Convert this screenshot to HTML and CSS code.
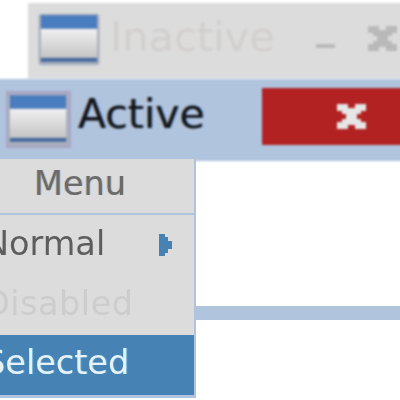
FILE: index.html
```html
<!DOCTYPE html>
<html lang="en">
<head>
    <meta charset="UTF-8">
    <title>Window theme preview</title>
    <link rel="stylesheet" href="styles.css">
</head>
<body>
    <svg class="defs" width="0" height="0">
        <defs>
            <linearGradient id="icon-body" x1="0" y1="0" x2="0" y2="1">
                <stop offset="0" stop-color="#f0f0f0"/>
                <stop offset="1" stop-color="#c4c4c4"/>
            </linearGradient>
            <symbol id="window-icon" viewBox="0 0 64 54">
                <rect x="0.5" y="0.5" width="63" height="53" rx="3" fill="#a9afbd"/>
                <rect x="3" y="2" width="58" height="14" fill="#4a7cc0"/>
                <rect x="3" y="16" width="58" height="30" fill="url(#icon-body)"/>
                <rect x="3" y="46" width="58" height="4" fill="#44699f"/>
            </symbol>
            <symbol id="close-x" viewBox="0 0 29 25">
                <polygon points="0,0 11,0 11,4 18,4 18,0 29,0 29,7 24,7 24,10 20,10 20,15 24,15 24,18 29,18 29,25 18,25 18,21 11,21 11,25 0,25 0,18 5,18 5,15 9,15 9,10 5,10 5,7 0,7"/>
            </symbol>
        </defs>
    </svg>

    <div class="titlebar inactive">
        <svg class="icon"><use href="#window-icon"/></svg>
        <span class="title">Inactive</span>
        <span class="minimize"></span>
        <svg class="x"><use href="#close-x"/></svg>
    </div>

    <div class="titlebar active">
        <span class="icon-focus"><svg class="icon"><use href="#window-icon"/></svg></span>
        <span class="title">Active</span>
        <div class="close"><svg class="x"><use href="#close-x"/></svg></div>
    </div>

    <div class="below">
        <div class="menu">
            <div class="menu-title">Menu</div>
            <div class="menu-item">
                <span class="label">Normal</span>
                <svg class="arrow" viewBox="0 0 13 22"><path d="M0 0h6v3h3v4h4v8h-4v4h-3v3h-6z"/></svg>
            </div>
            <div class="menu-item disabled"><span class="label">Disabled</span></div>
            <div class="menu-item selected"><span class="label">Selected</span></div>
        </div>
        <div class="client">
            <div class="strip"></div>
        </div>
    </div>
</body>
</html>
```

FILE: styles.css
```css
html, body {
    margin: 0;
    padding: 0;
}
body {
    width: 400px;
    height: 400px;
    overflow: hidden;
    background-color: #fff;
    font-family: "DejaVu Sans", sans-serif;
}
.defs {
    display: block;
    height: 0;
}
.titlebar {
    display: flex;
    align-items: center;
    box-sizing: border-box;
    margin-right: -4px; /* keeps the blur from fading at the page edge */
    filter: blur(0.8px);
}
.title {
    font-size: 41px;
    line-height: 50px;
}
.icon {
    display: block;
    width: 62px;
    height: 53px;
}
.x {
    display: block;
    width: 29px;
    height: 25px;
}

.inactive {
    margin-top: 3px;
    margin-left: 28px;
    height: 76px;
    padding: 0 0 3px 10px;
    background-color: #dcdcdc;
    color: #d2d0ce;
}
.inactive .title {
    margin: 0 0 5px 10px;
    font-size: 41.5px;
}
.inactive .x {
    fill: #b9b9b9;
    margin: 0 0 2px 33px;
}
.minimize {
    width: 19px;
    height: 4px;
    margin: 13px 0 0 41px;
    background-color: #b9b9b9;
}

.active {
    height: 82px;
    margin-left: -4px;
    padding: 0 0 1px 10px;
    background-color: #b0c4de;
    color: #10141c;
}
.active .title {
    margin: 0 0 12px 7px;
    text-shadow: -1px 0 rgba(190, 110, 0, 0.45), 1px 0 rgba(0, 100, 220, 0.45);
}
.icon-focus {
    display: block;
    padding: 2px 2px 2px 1px;
    background-color: #a9a6c4;
}
.close {
    align-self: flex-start;
    display: flex;
    align-items: center;
    box-sizing: border-box;
    height: 57px;
    width: 142px;
    margin: 9px 0 0 auto;
    padding-left: 75px;
    background-color: #b22222;
    fill: #e6e6e6;
}

.below {
    display: flex;
}
.menu {
    flex: none;
    width: 228px;
    margin: -2px 0 0 -34px;
    background-color: #dcdcdc;
    border-right: 2px solid #b0c4de;
    border-bottom: 3px solid #b0c4de;
    color: #5d5d5d;
    font-size: 33.5px;
    filter: blur(0.7px);
}
.menu-title {
    height: 54px;
    line-height: 50px;
    text-align: center;
    border-bottom: 2px solid #b0c4de;
    color: #6b6b6b;
    text-shadow: -1px 0 rgba(190, 130, 40, 0.3), 1px 0 rgba(40, 130, 220, 0.3);
}
.menu-item {
    display: flex;
    align-items: center;
    justify-content: space-between;
    box-sizing: border-box;
    height: 60px;
    padding: 0 22px 0 18px;
}
.label {
    padding-bottom: 4px;
}
.arrow {
    width: 13px;
    height: 22px;
    fill: #4682b4;
}
.disabled {
    color: #cdcdcd;
    letter-spacing: 0.5px;
}
.selected {
    background-color: #4682b4;
    color: #e6f2f8;
    text-shadow: 1px 0 rgba(120, 240, 255, 0.35);
}
.selected .label {
    padding-bottom: 6px;
}
.client {
    flex: 1;
    padding-top: 145px;
}
.strip {
    height: 14px;
    background-color: #b0c4de;
}
```
